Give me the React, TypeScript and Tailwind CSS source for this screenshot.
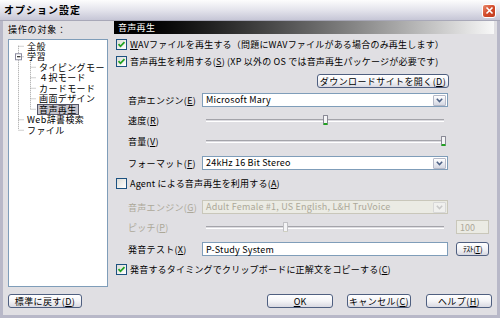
import React from "react";

const U = ({ c }: { c: string }) => <span className="underline underline-offset-1">{c}</span>;

function Check({ checked, disabled }: { checked?: boolean; disabled?: boolean }) {
  return (
    <span className={`relative flex w-[11px] h-[11px] shrink-0 items-center justify-center border ${disabled ? "border-[#b0b0b8]" : "border-[#1c5180]"} bg-gradient-to-br from-[#dcdcd7] to-white`}>
      {checked && (
        <svg width="9" height="9" viewBox="0 0 9 9">
          <path d="M1.5 4.2 L3.5 6.3 L7.5 2.2" stroke="#21a121" strokeWidth="1.8" fill="none" />
        </svg>
      )}
    </span>
  );
}

function Btn({ children, w }: { children: React.ReactNode; w: string }) {
  return (
    <div className={`${w} h-[14px] flex items-center justify-center rounded-[3px] border border-[#4f5f80] bg-gradient-to-b from-white via-[#f4f4f7] to-[#d9d9e2] text-[9px] leading-none text-black whitespace-nowrap`}>
      {children}
    </div>
  );
}

function Select({ value, disabled }: { value: string; disabled?: boolean }) {
  return (
    <div className={`w-[246px] h-[14px] flex items-center border ${disabled ? "border-[#c9c7ba] bg-[#ebebe4] text-[#aca899]" : "border-[#7f9db9] bg-white text-black"} pl-[3px] pr-[1px]`}>
      <span className="flex-1 text-[9px] leading-[12px] whitespace-nowrap tracking-[0.2px]">{value}</span>
      <span className={`w-[13px] h-[11px] flex items-center justify-center rounded-[1px] border ${disabled ? "border-[#d8d8d8] bg-[#f0f0ee]" : "border-[#b5b9c8] bg-gradient-to-b from-white to-[#d4d7e2]"}`}>
        <svg width="7" height="5" viewBox="0 0 7 5">
          <path d="M0.8 0.8 L3.5 3.6 L6.2 0.8" stroke={disabled ? "#c8c8c8" : "#4d6185"} strokeWidth="1.5" fill="none" />
        </svg>
      </span>
    </div>
  );
}

function Slider({ pos, disabled }: { pos: number; disabled?: boolean }) {
  return (
    <div className="w-[246px] h-[12px] px-[4px] flex items-center">
      <div className="relative flex-1 h-[3px] border-t border-[#a4a4aa] border-b border-b-white bg-[#dcdbe0]">
        <div
          className={`absolute top-[-5px] w-[5px] h-[10px] rounded-[1px] border ${disabled ? "border-[#c0c0c4] border-b-[#d0d0c0]" : "border-[#8a8a96] border-b-[#21a121] border-b-2"} bg-[#f4f4f6]`}
          style={{ left: `calc(${pos * 100}% - 3px)` }}
        />
      </div>
    </div>
  );
}

function Label({ children, disabled }: { children: React.ReactNode; disabled?: boolean }) {
  return (
    <div className={`w-[74px] shrink-0 text-[9px] leading-none whitespace-nowrap tracking-[0.3px] ${disabled ? "text-[#aca899]" : "text-black"}`}>{children}</div>
  );
}

const treeItems: { t: string; lvl: number; sel?: boolean }[] = [
  { t: "全般", lvl: 0 },
  { t: "学習", lvl: 0 },
  { t: "タイピングモー", lvl: 1 },
  { t: "４択モード", lvl: 1 },
  { t: "カードモード", lvl: 1 },
  { t: "画面デザイン", lvl: 1 },
  { t: "音声再生", lvl: 1, sel: true },
  { t: "Web辞書検索", lvl: 0 },
  { t: "ファイル", lvl: 0 },
];

const rowText = "h-[13px] flex items-center gap-[3px] pl-[2px] text-[9px] leading-none whitespace-nowrap tracking-[0.2px]";

export default function App() {
  const rowC = (i: number) => 5 + i * 10.5 + 0.75;
  return (
    <div className="w-[500px] h-[318px] flex flex-col font-['Noto_Sans_CJK_JP',sans-serif] text-black overflow-hidden bg-[#b8b8c8]">
      {/* title bar */}
      <div className="h-[21px] shrink-0 flex items-center pl-[4px] pr-[4px] bg-gradient-to-b from-[#fdfdfd] via-[#e4e4ec] to-[#c6c6d6] border-b border-[#a8a8b8]">
        <span className="flex-1 text-[10px] font-bold leading-none tracking-[1px] text-[#000]">オプション設定</span>
        <span className="w-[14px] h-[14px] flex items-center justify-center rounded-[3px] border border-white bg-gradient-to-br from-[#e88a6c] via-[#d2492a] to-[#c13c1e] mt-[1px]">
          <svg width="9" height="9" viewBox="0 0 9 9">
            <path d="M1.5 1.5 L7.5 7.5 M7.5 1.5 L1.5 7.5" stroke="white" strokeWidth="1.6" />
          </svg>
        </span>
      </div>
      {/* body */}
      <div className="flex-1 flex flex-col bg-[#e0dfe3] mx-[3px] mb-[3px] pl-[5px] pr-[3px]">
        <div className="h-[266px] flex gap-[6px]">
          {/* left */}
          <div className="w-[100px] flex flex-col">
            <div className="h-[14px] mt-[4px] text-[9px] leading-none tracking-[0.8px]">操作の対象：</div>
            <div className="relative flex-1 border border-[#7f9db9] bg-white pt-[1px]">
              <svg className="absolute left-0 top-0" width="98" height="120">
                <g stroke="#a0a0a0" strokeWidth="1" strokeDasharray="1 1" fill="none">
                  <path d={`M9.5 ${rowC(0)} V${rowC(8)}`} />
                  {[0, 1, 7, 8].map((i) => (
                    <path key={i} d={`M9.5 ${rowC(i) + 0.5} H15`} />
                  ))}
                  <path d={`M21.5 ${rowC(1) + 4} V${rowC(6)}`} />
                  {[2, 3, 4, 5, 6].map((i) => (
                    <path key={i} d={`M21.5 ${rowC(i) + 0.5} H27`} />
                  ))}
                </g>
                <rect x="6.5" y={rowC(1) - 2.5} width="6" height="6" fill="white" stroke="#8c8ca0" />
                <path d={`M8 ${rowC(1) + 0.5} H11.5`} stroke="#000" />
              </svg>
              {treeItems.map((it, i) => (
                <div key={i} className={`relative h-[10.5px] flex items-center ${it.lvl === 0 ? "pl-[17px]" : "pl-[29px]"}`}>
                  <span className={`text-[9px] leading-[9px] whitespace-nowrap tracking-[0.4px] px-[1px] ${it.sel ? "bg-[#c4c3cc] outline outline-1 outline-[#555566]" : ""}`}>{it.t}</span>
                </div>
              ))}
            </div>
          </div>
          {/* right */}
          <div className="flex-1 flex flex-col">
            <div className="h-[13px] flex items-center pl-[4px] bg-gradient-to-r from-black via-[#606060] to-[#f8f8f8] text-white text-[9px] leading-none tracking-[0.3px]">音声再生</div>
            <div className={`${rowText} mt-[4px]`}>
              <Check checked />
              <span><U c="W" />AVファイルを再生する（問題にWAVファイルがある場合のみ再生します）</span>
            </div>
            <div className={`${rowText} mt-[4px]`}>
              <Check checked />
              <span>音声再生を利用する(<U c="S" />) (XP 以外の OS では音声再生パッケージが必要です)</span>
            </div>
            <div className="h-[13px] mt-[6px] flex justify-end pr-[45px]">
              <Btn w="w-[132px]"><span className="tracking-[0.4px]">ダウンロードサイトを開く(<U c="D" />)</span></Btn>
            </div>
            <div className="h-[14px] mt-[6px] flex items-center pl-[14px]">
              <Label>音声エンジン(<U c="E" />)</Label>
              <Select value="Microsoft Mary" />
            </div>
            <div className="h-[12px] mt-[7px] flex items-center pl-[14px]">
              <Label>速度(<U c="R" />)</Label>
              <Slider pos={0.505} />
            </div>
            <div className="h-[12px] mt-[9px] flex items-center pl-[14px]">
              <Label>音量(<U c="V" />)</Label>
              <Slider pos={1} />
            </div>
            <div className="h-[14px] mt-[9px] flex items-center pl-[14px]">
              <Label>フォーマット(<U c="F" />)</Label>
              <Select value="24kHz 16 Bit Stereo" />
            </div>
            <div className={`${rowText} mt-[7px]`}>
              <Check />
              <span>Agent による音声再生を利用する(<U c="A" />)</span>
            </div>
            <div className="h-[14px] mt-[10px] flex items-center pl-[14px]">
              <Label disabled>音声エンジン(<U c="G" />)</Label>
              <Select value="Adult Female #1, US English, L&H TruVoice" disabled />
            </div>
            <div className="h-[14px] mt-[6px] flex items-center pl-[14px]">
              <Label disabled>ピッチ(<U c="P" />)</Label>
              <Slider pos={0.335} disabled />
              <div className="ml-[8px] w-[33px] h-[14px] border border-[#c9c7ba] bg-[#ebebe4] text-[#aca899] text-[9px] leading-none flex items-center pl-[3px]">100</div>
            </div>
            <div className="h-[14px] mt-[8px] flex items-center pl-[14px]">
              <Label>発音テスト(<U c="X" />)</Label>
              <div className="w-[246px] h-[14px] border border-[#7f9db9] bg-white flex items-center pl-[3px] text-[9px] leading-none tracking-[0.2px]">P-Study System</div>
              <div className="ml-[8px]">
                <Btn w="w-[33px]"><span className="text-[8px] tracking-[-0.5px]">ﾃｽﾄ(<U c="T" />)</span></Btn>
              </div>
            </div>
            <div className={`${rowText} mt-[7px]`}>
              <Check checked />
              <span>発音するタイミングでクリップボードに正解文をコピーする(<U c="C" />)</span>
            </div>
          </div>
        </div>
        <div className="h-[14px] mt-[7px] flex items-center">
          <Btn w="w-[74px]"><span className="tracking-[0.4px]">標準に戻す(<U c="D" />)</span></Btn>
          <div className="flex-1" />
          <Btn w="w-[66px]"><span><U c="O" />K</span></Btn>
          <div className="w-[14px]" />
          <Btn w="w-[64px]"><span className="tracking-[0.4px]">キャンセル(<U c="C" />)</span></Btn>
          <div className="w-[15px]" />
          <Btn w="w-[66px]"><span className="tracking-[0.4px]">ヘルプ(<U c="H" />)</span></Btn>
          <div className="w-[2px]" />
        </div>
      </div>
    </div>
  );
}
